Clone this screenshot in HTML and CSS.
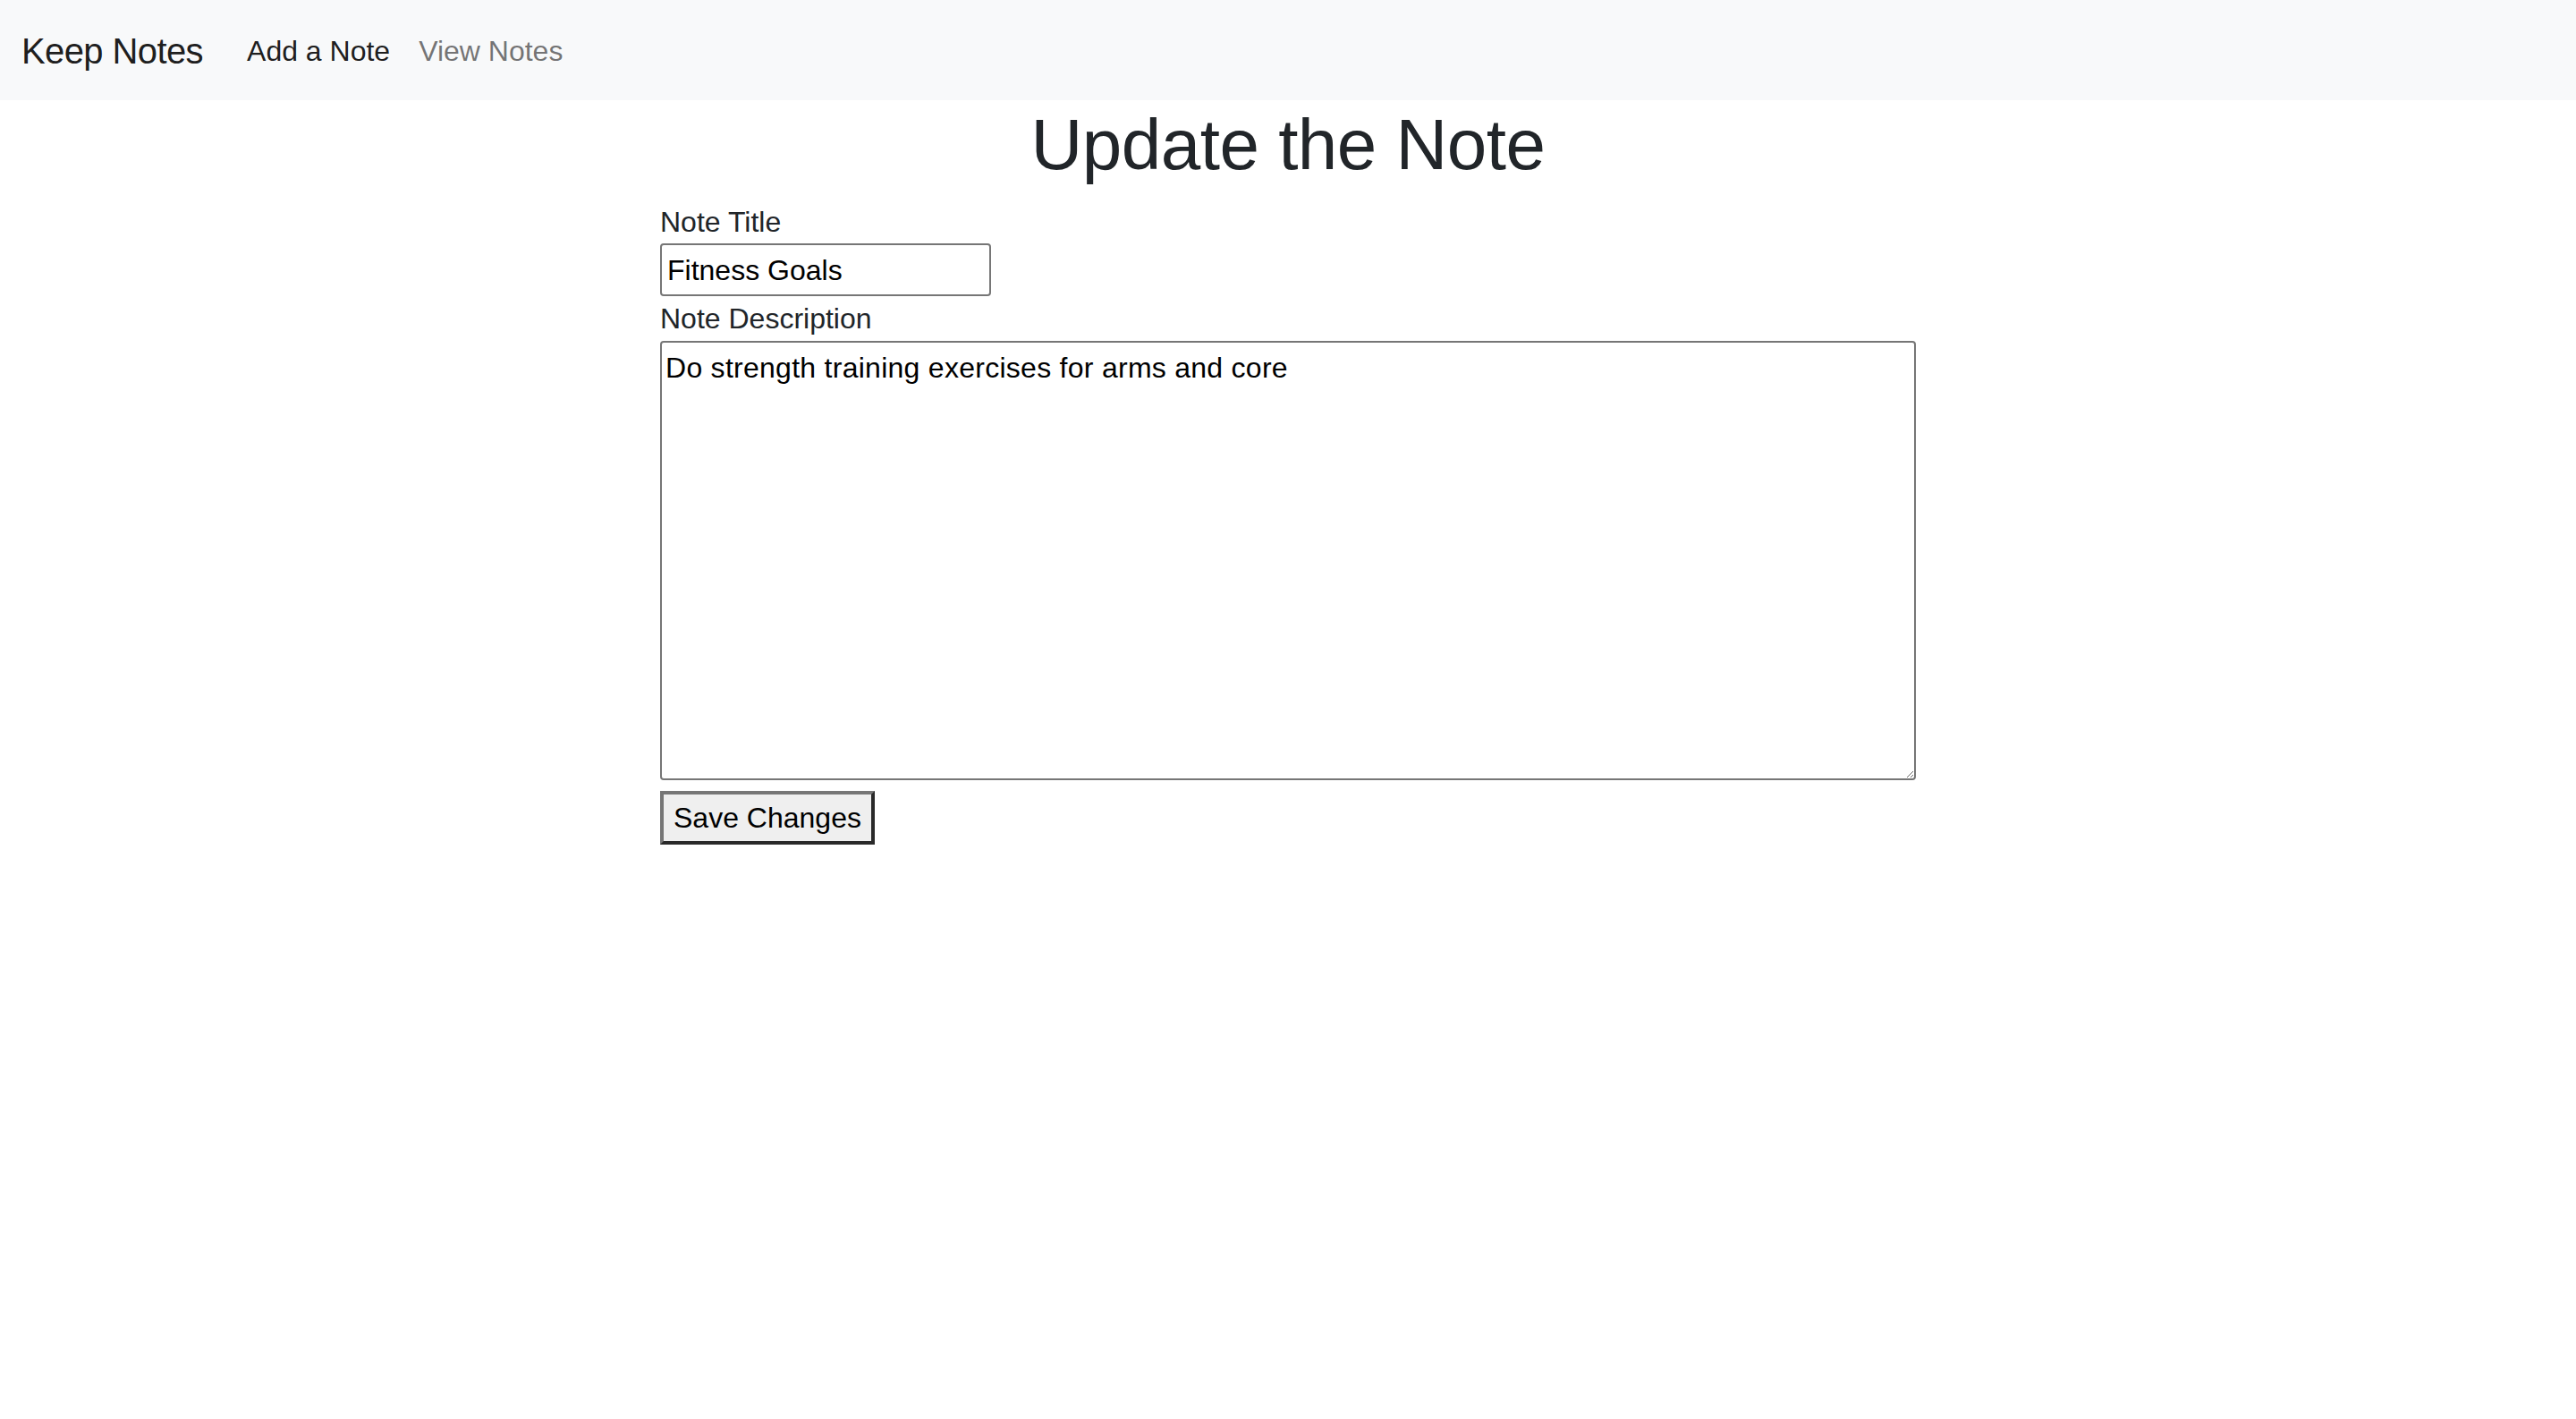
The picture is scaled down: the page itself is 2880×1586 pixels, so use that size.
FILE: index.html
```html
<!DOCTYPE html>
<html lang="en">
<head>
<meta charset="utf-8">
<title>Keep Notes</title>
<link rel="stylesheet" href="styles.css">
</head>
<body>
<nav class="navbar">
  <a class="brand" href="#">Keep Notes</a>
  <ul class="nav">
    <li><a class="nav-link active" href="#">Add a Note</a></li>
    <li><a class="nav-link" href="#">View Notes</a></li>
  </ul>
</nav>
<main class="page">
  <h1 class="title">Update the Note</h1>
  <form class="note-form">
    <label class="field-label" for="title">Note Title</label>
    <input class="title-input" id="title" type="text" value="Fitness Goals">
    <label class="field-label" for="desc">Note Description</label>
    <textarea class="desc-input" id="desc">Do strength training exercises for arms and core</textarea>
    <button class="save-btn" type="button">Save Changes</button>
  </form>
</main>
</body>
</html>
```

FILE: styles.css
```css
* { box-sizing: border-box; }

html, body {
  margin: 0;
  padding: 0;
  background: #ffffff;
}

body {
  font-family: "Liberation Sans", Arial, sans-serif;
  font-size: 32px;
  line-height: 1.5;
  color: #212529;
}

.navbar {
  height: 112px;
  background: #f8f9fa;
  display: flex;
  align-items: center;
  padding: 0 24px;
}

.brand {
  font-size: 40px;
  line-height: 60px;
  letter-spacing: -0.6px;
  color: rgba(0, 0, 0, 0.9);
  text-decoration: none;
  margin-right: 33px;
  margin-top: 2px;
}

.nav {
  list-style: none;
  margin: 0;
  padding: 0;
  display: flex;
}

.nav-link {
  display: block;
  padding: 16px 16px;
  font-size: 32px;
  line-height: 48px;
  color: rgba(0, 0, 0, 0.55);
  text-decoration: none;
  margin-top: 2px;
}

.nav-link.active {
  color: rgba(0, 0, 0, 0.9);
}

.page {
  width: 1404px;
  margin: 0 auto;
}

.title {
  margin: 2px 0 14px;
  font-size: 80px;
  font-weight: 500;
  line-height: 96px;
  text-align: center;
  letter-spacing: -0.5px;
  color: #212529;
}

.note-form {
  display: flex;
  flex-direction: column;
  align-items: flex-start;
}

.field-label {
  display: block;
  font-size: 32px;
  line-height: 48px;
  color: #212529;
}

.title-input {
  width: 370px;
  height: 59px;
  margin: 0 0 1px;
  padding: 4px 6px 2px;
  border: 2px solid #767676;
  border-radius: 4px;
  font-family: "Liberation Sans", Arial, sans-serif;
  font-size: 32px;
  line-height: 48px;
  color: #000000;
  background: #ffffff;
}

.desc-input {
  width: 1404px;
  height: 491px;
  margin: 1px 0 0;
  padding: 4px 4px;
  border: 2px solid #767676;
  border-radius: 4px;
  font-family: "Liberation Sans", Arial, sans-serif;
  font-size: 32px;
  line-height: 48px;
  letter-spacing: 0.27px;
  color: #000000;
  background: #ffffff;
}

.save-btn {
  margin-top: 12px;
  height: 60px;
  padding: 0 11px;
  border-style: solid;
  border-width: 4px;
  border-color: #767676 #2a2a2a #2a2a2a #767676;
  background: #efefef;
  font-family: "Liberation Sans", Arial, sans-serif;
  font-size: 32px;
  line-height: 48px;
  color: #000000;
  border-radius: 0;
}
```
